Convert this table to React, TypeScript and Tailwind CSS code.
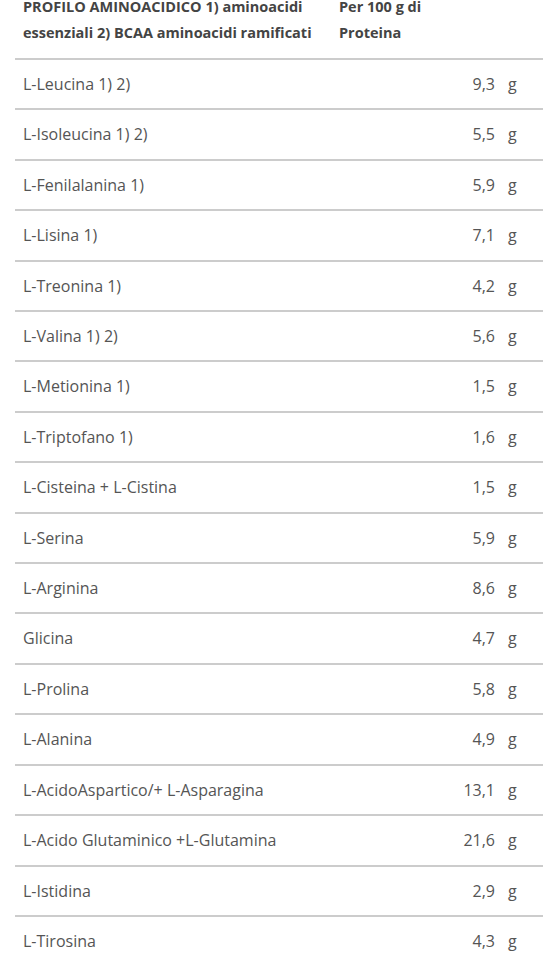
import * as React from "react";

const rows: { name: string; value: string }[] = [
  { name: "L-Leucina 1) 2)", value: "9,3" },
  { name: "L-Isoleucina 1) 2)", value: "5,5" },
  { name: "L-Fenilalanina 1)", value: "5,9" },
  { name: "L-Lisina 1)", value: "7,1" },
  { name: "L-Treonina 1)", value: "4,2" },
  { name: "L-Valina 1) 2)", value: "5,6" },
  { name: "L-Metionina 1)", value: "1,5" },
  { name: "L-Triptofano 1)", value: "1,6" },
  { name: "L-Cisteina + L-Cistina", value: "1,5" },
  { name: "L-Serina", value: "5,9" },
  { name: "L-Arginina", value: "8,6" },
  { name: "Glicina", value: "4,7" },
  { name: "L-Prolina", value: "5,8" },
  { name: "L-Alanina", value: "4,9" },
  { name: "L-AcidoAspartico/+ L-Asparagina", value: "13,1" },
  { name: "L-Acido Glutaminico +L-Glutamina", value: "21,6" },
  { name: "L-Istidina", value: "2,9" },
  { name: "L-Tirosina", value: "4,3" },
];

const App: React.FC = () => (
  <div className="h-[960px] overflow-hidden bg-white font-['Open_Sans',sans-serif] text-[16px] text-[#555]">
    <div className="-mt-[6px] ml-[15px]">
      <div className="grid grid-cols-[316px_169px_43px] pb-3 text-[14.5px] font-bold leading-[26px] text-[#444]">
        <div className="pl-2">
          PROFILO AMINOACIDICO 1) aminoacidi
          <br />
          essenziali 2) BCAA aminoacidi ramificati
        </div>
        <div className="pl-2">
          Per 100 g di
          <br />
          Proteina
        </div>
        <div />
      </div>
      {rows.map((r) => (
        <div
          key={r.name}
          className="grid grid-cols-[316px_169px_43px] border-t-2 border-[#cccccc] py-3 leading-[24.4px]"
        >
          <div className="pl-2">{r.name}</div>
          <div className="pr-[5px] text-right">{r.value}</div>
          <div className="pl-2">g</div>
        </div>
      ))}
    </div>
  </div>
);

export default App;
